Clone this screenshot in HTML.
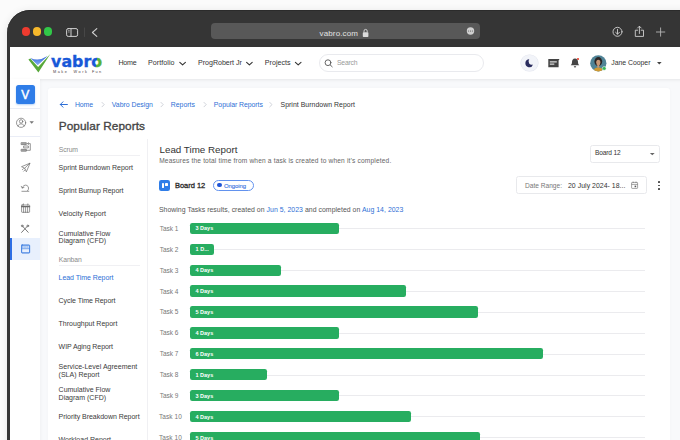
<!DOCTYPE html>
<html><head><meta charset="utf-8"><title>Vabro - Lead Time Report</title>
<style>
html,body{margin:0;padding:0;}
body{width:680px;height:440px;overflow:hidden;position:relative;background:#fbfbfb;font-family:"Liberation Sans",Arial,sans-serif;}
.t{position:absolute;white-space:nowrap;}
.b{position:absolute;}
svg{position:absolute;overflow:visible;}
</style></head><body>
<div class="b" style="left:6.5px;top:10.3px;width:700px;height:500px;background:#353535;border-radius:23px 0 0 0;box-shadow:0 1px 9px rgba(0,0,0,.09), inset 0 1px 0 #2b2b2b;"></div>
<div class="b" style="left:10px;top:47px;width:700px;height:500px;background:#f8f9fb;"></div>
<div class="b" style="left:21.65px;top:27.35px;width:8.5px;height:8.5px;background:#ee3b2f;border-radius:50%;"></div>
<div class="b" style="left:32.85px;top:27.35px;width:8.5px;height:8.5px;background:#f6b82b;border-radius:50%;"></div>
<div class="b" style="left:43.95px;top:27.35px;width:8.5px;height:8.5px;background:#31c748;border-radius:50%;"></div>
<svg width="680" height="440" viewBox="0 0 680 440" style="left:0;top:0" fill="none" stroke="#d0d0d0" stroke-width="1" stroke-linecap="round" stroke-linejoin="round">
<rect x="66.6" y="28.6" width="11" height="7.8" rx="1.6"/>
<line x1="71" y1="28.6" x2="71" y2="36.4"/>
<line x1="68.3" y1="30.6" x2="69.3" y2="30.6" stroke-width=".6"/>
<line x1="68.3" y1="32" x2="69.3" y2="32" stroke-width=".6"/>
<line x1="84.5" y1="28" x2="84.5" y2="36.5" stroke="#4c4c4c" stroke-width=".8"/>
<polyline points="96.8,28.6 92.4,32.5 96.8,36.4" stroke-width="1.1"/>
<circle cx="617.5" cy="31.8" r="4.5" stroke-width=".9"/>
<path d="M617.5 29.3V34M615.6 32.3L617.5 34.2L619.4 32.3" stroke-width=".9"/>
<path d="M637.6 30.2H635.3V36.4H643.5V30.2H641.2" stroke-width=".9"/>
<path d="M639.4 33.5V26.4M637.6 28L639.4 26.2L641.2 28" stroke-width=".9"/>
<path d="M660.6 27.9V36.2M656.4 32H664.8" stroke-width=".9" stroke="#b4b4b4"/>
</svg>
<div class="b" style="left:211px;top:22.7px;width:269.3px;height:16.1px;background:#585858;border-radius:4px;"></div>
<div class="t" style="left:319.50px;top:23.75px;font-size:8px;line-height:20px;color:#e2e2e2;letter-spacing:0.144px;">vabro.com</div>
<svg width="680" height="440" viewBox="0 0 680 440" style="left:0;top:0">
<rect x="362.8" y="32.2" width="5.6" height="4.8" rx=".7" fill="#dcdcdc"/>
<path d="M364 32.4V31a1.6 1.6 0 0 1 3.2 0V32.4" fill="none" stroke="#dcdcdc" stroke-width=".9"/>
<circle cx="470.5" cy="31" r="3.7" fill="#cfcfcf"/>
<circle cx="468.6" cy="31" r=".55" fill="#555"/><circle cx="470.5" cy="31" r=".55" fill="#555"/><circle cx="472.4" cy="31" r=".55" fill="#555"/>
</svg>
<div class="b" style="left:10px;top:47px;width:680px;height:32px;background:#fff;box-shadow:0 1px 3px rgba(0,0,0,.08);"></div>
<svg width="680" height="440" viewBox="0 0 680 440" style="left:0;top:0">
<defs><linearGradient id="lgb" x1="0" y1="0" x2="0" y2="1"><stop offset="0" stop-color="#2f63d8"/><stop offset="1" stop-color="#86adf6"/></linearGradient></defs>
<path d="M28.400 59.500L30.300 58.500L38.100 67.100L50.300 54.100L38.400 72.500Z" fill="#58a83a"/>
<path d="M30.400 57.900Q38.600 61.900 47.600 56.100L37.700 65.200Z" fill="url(#lgb)"/>
</svg>
<svg width="680" height="440" viewBox="0 0 680 440" style="left:0;top:0">
<defs><linearGradient id="og" gradientUnits="userSpaceOnUse" x1="92.500" y1="59" x2="101.500" y2="61"><stop offset=".5" stop-color="#1858d8"/><stop offset=".5" stop-color="#55b13c"/></linearGradient></defs>
<text x="51.100" y="67" font-family="DejaVu Sans, sans-serif" font-weight="bold" font-size="16.500" textLength="51" lengthAdjust="spacingAndGlyphs" fill="#1858d8" stroke="#1858d8" stroke-width=".35">vabr<tspan fill="url(#og)" stroke="url(#og)">o</tspan></text>
</svg>
<div class="t" style="left:52.90px;top:62.25px;font-size:3.8px;line-height:20px;color:#4a4444;letter-spacing:1.603px;">Make</div>
<div class="t" style="left:73.60px;top:62.25px;font-size:3.8px;line-height:20px;color:#4a4444;letter-spacing:1.465px;">Work</div>
<div class="t" style="left:92.00px;top:62.25px;font-size:3.8px;line-height:20px;color:#4a4444;letter-spacing:1.226px;">Fun</div>
<div class="t" style="left:118.40px;top:53.25px;font-size:7.1px;line-height:20px;color:#333;letter-spacing:-0.214px;">Home</div>
<div class="t" style="left:148.00px;top:53.25px;font-size:7.1px;line-height:20px;color:#333;letter-spacing:0.057px;">Portfolio</div>
<div class="t" style="left:198.00px;top:53.25px;font-size:7.1px;line-height:20px;color:#333;letter-spacing:-0.025px;">ProgRobert Jr</div>
<div class="t" style="left:264.80px;top:53.25px;font-size:7.1px;line-height:20px;color:#333;letter-spacing:0.022px;">Projects</div>
<svg width="680" height="440" viewBox="0 0 680 440" style="left:0;top:0" fill="none" stroke="#333" stroke-width="1.100" stroke-linecap="round" stroke-linejoin="round"><polyline points="179.79999999999998,62.3 182.6,64.9 185.4,62.3"/><polyline points="246.6,62.3 249.4,64.9 252.20000000000002,62.3"/><polyline points="295.4,62.3 298.2,64.9 301.0,62.3"/></svg>
<div class="b" style="left:319px;top:54.2px;width:164.8px;height:17.4px;background:#fff;border:.7px solid #e9eaee;border-radius:9px;box-sizing:border-box;"></div>
<svg width="680" height="440" viewBox="0 0 680 440" style="left:0;top:0" fill="none" stroke="#555" stroke-width=".9" stroke-linecap="round"><circle cx="328" cy="62.700" r="2.900"/><line x1="330.200" y1="64.900" x2="332.200" y2="66.800"/></svg>
<div class="t" style="left:337.00px;top:52.75px;font-size:6.8px;line-height:20px;color:#9a9a9a;letter-spacing:-0.188px;">Search</div>
<div class="b" style="left:521.3px;top:54.8px;width:16.4px;height:16.4px;background:#f2f4f9;border-radius:50%;box-shadow:0 0 0 .6px #e3e6ee;"></div>
<svg width="680" height="440" viewBox="0 0 680 440" style="left:0;top:0">
<path transform="translate(-0.9 0.1) translate(530 63) scale(.86) translate(-530 -63)" d="M530.2 58.6a4.6 4.6 0 1 0 4.4 6.1a3.9 3.9 0 0 1 -4.4 -6.1z" fill="#2a2c5e"/>
<path d="M548.3 58.9H559.5L558.6 60.6V67.2H548.3Z" fill="#444"/>
<rect x="549.8" y="61.4" width="7" height="1" fill="#fff"/><rect x="549.8" y="63.6" width="4.5" height="1" fill="#fff"/>
<path d="M575 58.4c2.2 0 3 1.8 3 3.6c0 1.8.6 2.6 1.3 3.3H570.7c.7-.7 1.3-1.5 1.3-3.3c0-1.8.8-3.600 3-3.600z" fill="#444"/>
<path d="M573.8 66.2a1.2 1.2 0 0 0 2.400 0z" fill="#444"/>
<circle cx="578" cy="59" r="1.1" fill="#e8412f"/>
</svg>
<svg width="17" height="17" viewBox="0 0 17 17" style="left:589.8px;top:54.6px">
<defs><clipPath id="av"><circle cx="8.3" cy="8.3" r="8.1"/></clipPath></defs>
<g clip-path="url(#av)">
<rect width="17" height="17" fill="#4f8396"/>
<ellipse cx="8.3" cy="6.6" rx="3.9" ry="4.5" fill="#2b2626"/>
<ellipse cx="8.3" cy="7.5" rx="2.1" ry="2.7" fill="#c79878"/>
<path d="M3.400 17c0-3.400 2.300-4.600 4.900-4.600s4.900 1.200 4.900 4.600z" fill="#cf9a34"/>
<rect x="7.300" y="9.800" width="2" height="2.800" fill="#c79878"/>
</g>
<circle cx="14.2" cy="13.400" r="1.900" fill="#35b558" stroke="#fff" stroke-width=".5"/>
</svg>
<div class="t" style="left:611.30px;top:52.75px;font-size:6.9px;line-height:20px;color:#333;letter-spacing:-0.031px;">Jane Cooper</div>
<svg width="680" height="440" viewBox="0 0 680 440" style="left:0;top:0"><path d="M657 61.9H661.600L659.300 64.400Z" fill="#444"/></svg>
<div class="b" style="left:10px;top:79px;width:30px;height:400px;background:#fff;box-shadow:1px 0 3px rgba(0,0,0,.03);"></div>
<div class="b" style="left:15.5px;top:84.5px;width:19.5px;height:19.5px;background:#2f7de8;border-radius:2.5px;box-shadow:0 1px 2px rgba(47,125,232,.35);"></div>
<div class="t" style="left:21.20px;top:85.25px;font-size:12px;line-height:20px;color:#fff;-webkit-text-stroke:0.45px #fff;">V</div>
<div class="b" style="left:10px;top:107.9px;width:30px;height:0.8px;background:#eaedf6;"></div>
<div class="b" style="left:10px;top:136px;width:30px;height:0.8px;background:#eaedf6;"></div>
<div class="b" style="left:10px;top:238.2px;width:30px;height:21.4px;background:#e8f0fd;"></div>
<div class="b" style="left:10px;top:238.2px;width:1.6px;height:21.4px;background:#2f6fe4;"></div>
<svg width="680" height="440" viewBox="0 0 680 440" style="left:0;top:0" fill="none" stroke="#6a6a6a" stroke-width=".7" stroke-linecap="round" stroke-linejoin="round">
<circle cx="21.100" cy="122.800" r="4.600"/><circle cx="21.100" cy="121.400" r="1.700"/><path d="M17.900 126c.7-1.500 1.900-2.100 3.200-2.100s2.500.6 3.200 2.100"/>
<path d="M29.500 121.300H33.900L31.700 123.800Z" fill="#777" stroke="none"/>
<!-- flow -->
<rect x="21.500" y="142.700" width="4.800" height="1.900" fill="#aaa"/><rect x="24" y="146" width="4.400" height="1.900"/><rect x="21.500" y="149.300" width="4.800" height="1.900" fill="#aaa"/>
<path d="M27.600 143.600H30.300V150.300H26.500M28.600 142.700L27.600 143.600L28.600 144.500"/>
<!-- plane -->
<path d="M29.700 163.300L21.500 166.700L24.700 168.200L26.200 171.500Z"/><path d="M24.700 168.200L29.700 163.300"/><path d="M22.400 169.700L23.500 168.600M23.700 171.200L24.900 170"/>
<!-- undo -->
<path d="M21.900 191.300H28.800"/><path d="M22.300 187.900A3.200 3.200 0 1 1 27.600 190.700"/><path d="M21.300 186.300L22.200 188.100L24 187.400"/>
<!-- calendar -->
<rect x="21.600" y="205" width="8" height="7.300" rx=".5"/><path d="M21.600 206.700H29.600" stroke-width="1.300"/><path d="M23.400 203.900V205.200M27.800 203.900V205.200M23.600 207.200V212.300M25.600 207.200V212.300M27.600 207.200V212.300"/>
<!-- tools -->
<path d="M22 225.600L28.200 232.300M28.100 225.400L21.600 232.400" stroke-width=".9"/><circle cx="22.200" cy="225.900" r=".9"/><circle cx="27.800" cy="225.900" r=".9"/>
<!-- board active -->
<g stroke="#3a7be0"><rect x="21.600" y="245.100" width="8" height="7.800" rx=".5"/><path d="M21.600 248.700H29.600"/><rect x="21.600" y="245.100" width="8" height="3.600" fill="#8fb6f0" stroke="none"/><rect x="21.600" y="245.100" width="8" height="7.800" rx=".5"/><path d="M23.200 246.500V247.500M25 246.300V247.500M26.800 246.500V247.500M28.300 246.300V247.500" stroke="#fff" stroke-width=".6"/></g>
</svg>
<div class="b" style="left:48.2px;top:87.8px;width:621.8px;height:400px;background:#fff;border-radius:3px 3px 0 0;box-shadow:0 0 3px rgba(0,0,0,.03);"></div>
<svg width="680" height="440" viewBox="0 0 680 440" style="left:0;top:0" fill="none" stroke="#2e6fd6" stroke-width="1" stroke-linecap="round" stroke-linejoin="round"><path d="M67.400 104.500H60.400M63 101.800L60.300 104.500L63 107.200"/></svg>
<div class="t" style="left:75.00px;top:94.75px;font-size:6.9px;line-height:20px;color:#2e6fd6;letter-spacing:-0.136px;">Home</div>
<div class="t" style="left:111.80px;top:94.75px;font-size:6.9px;line-height:20px;color:#2e6fd6;letter-spacing:-0.009px;">Vabro Design</div>
<div class="t" style="left:170.80px;top:94.75px;font-size:6.9px;line-height:20px;color:#2e6fd6;letter-spacing:0.007px;">Reports</div>
<div class="t" style="left:213.80px;top:94.75px;font-size:6.9px;line-height:20px;color:#2e6fd6;letter-spacing:-0.047px;">Popular Reports</div>
<div class="t" style="left:280.50px;top:94.75px;font-size:6.9px;line-height:20px;color:#333;letter-spacing:0.041px;">Sprint Burndown Report</div>
<svg width="680" height="440" viewBox="0 0 680 440" style="left:0;top:0" fill="none" stroke="#c4c8d0" stroke-width=".8" stroke-linecap="round" stroke-linejoin="round"><polyline points="102,102.4 104.2,104.6 102,106.8"/><polyline points="161,102.4 163.2,104.6 161,106.8"/><polyline points="204,102.4 206.2,104.6 204,106.8"/><polyline points="269.8,102.4 272.0,104.6 269.8,106.8"/></svg>
<div class="t" style="left:58.80px;top:116.25px;font-size:11.8px;line-height:20px;color:#454545;letter-spacing:0.067px;-webkit-text-stroke:0.35px #454545;">Popular Reports</div>
<div class="t" style="left:58.80px;top:139.75px;font-size:6.8px;line-height:20px;color:#8a8a8a;letter-spacing:-0.111px;">Scrum</div>
<div class="b" style="left:58.5px;top:155px;width:81px;height:0.7px;background:#f0f0f3;"></div>
<div class="t" style="left:58.60px;top:157.75px;font-size:7px;line-height:20px;color:#3b3b3b;letter-spacing:-0.014px;">Sprint Burndown Report</div>
<div class="t" style="left:58.60px;top:180.75px;font-size:7px;line-height:20px;color:#3b3b3b;letter-spacing:-0.045px;">Sprint Burnup Report</div>
<div class="t" style="left:58.60px;top:203.75px;font-size:7px;line-height:20px;color:#3b3b3b;letter-spacing:0.023px;">Velocity Report</div>
<div class="t" style="left:58.60px;top:223.75px;font-size:7px;line-height:20px;color:#3b3b3b;">Cumulative Flow</div>
<div class="t" style="left:58.60px;top:230.75px;font-size:7px;line-height:20px;color:#3b3b3b;">Diagram (CFD)</div>
<div class="t" style="left:58.80px;top:249.75px;font-size:6.8px;line-height:20px;color:#8a8a8a;letter-spacing:-0.089px;">Kanban</div>
<div class="b" style="left:58.5px;top:265.4px;width:81px;height:0.7px;background:#f0f0f3;"></div>
<div class="t" style="left:58.60px;top:267.75px;font-size:7px;line-height:20px;color:#2e6fd6;letter-spacing:-0.050px;">Lead Time Report</div>
<div class="t" style="left:58.60px;top:290.75px;font-size:7px;line-height:20px;color:#3b3b3b;letter-spacing:-0.042px;">Cycle Time Report</div>
<div class="t" style="left:58.60px;top:313.75px;font-size:7px;line-height:20px;color:#3b3b3b;">Throughput Report</div>
<div class="t" style="left:58.60px;top:336.75px;font-size:7px;line-height:20px;color:#3b3b3b;letter-spacing:-0.074px;">WIP Aging Report</div>
<div class="t" style="left:58.60px;top:356.75px;font-size:7px;line-height:20px;color:#3b3b3b;letter-spacing:0.023px;">Service-Level Agreement</div>
<div class="t" style="left:58.60px;top:364.75px;font-size:7px;line-height:20px;color:#3b3b3b;">(SLA) Report</div>
<div class="t" style="left:58.60px;top:379.75px;font-size:7px;line-height:20px;color:#3b3b3b;">Cumulative Flow</div>
<div class="t" style="left:58.60px;top:387.75px;font-size:7px;line-height:20px;color:#3b3b3b;">Diagram (CFD)</div>
<div class="t" style="left:58.60px;top:406.75px;font-size:7px;line-height:20px;color:#3b3b3b;letter-spacing:-0.029px;">Priority Breakdown Report</div>
<div class="t" style="left:58.60px;top:429.75px;font-size:7px;line-height:20px;color:#3b3b3b;">Workload Report</div>
<div class="b" style="left:147.2px;top:139px;width:0.7px;height:320px;background:#f0f0f3;"></div>
<div class="t" style="left:159.50px;top:139.75px;font-size:9.8px;line-height:20px;color:#333;letter-spacing:0.007px;">Lead Time Report</div>
<div class="t" style="left:159.20px;top:150.75px;font-size:6.6px;line-height:20px;color:#666;letter-spacing:0.166px;">Measures the total time from when a task is created to when it’s completed.</div>
<div class="b" style="left:159.2px;top:180px;width:10.6px;height:10.7px;background:#2f7de8;border-radius:2.2px;"></div>
<div class="b" style="left:161.8px;top:182.8px;width:2.1px;height:5.2px;background:#fff;border-radius:.4px;"></div>
<div class="b" style="left:164.9px;top:182.8px;width:3.2px;height:3.3px;background:#fff;border-radius:.4px;"></div>
<div class="t" style="left:174.90px;top:175.75px;font-size:7.5px;line-height:20px;color:#2b2b2b;letter-spacing:-0.006px;-webkit-text-stroke:0.3px #2b2b2b;">Board 12</div>
<div class="b" style="left:213px;top:179.5px;width:40.6px;height:11.3px;background:#fff;border:.6px solid #6292ee;border-radius:6px;box-sizing:border-box;"></div>
<div class="b" style="left:217.1px;top:182.8px;width:4.6px;height:4.6px;background:#1f55d6;border-radius:50%;"></div>
<div class="t" style="left:224.00px;top:176.25px;font-size:6px;line-height:20px;color:#3d76df;letter-spacing:-0.114px;-webkit-text-stroke:0.12px #3d76df;">Ongoing</div>
<div class="t" style="left:158.90px;top:199.75px;font-size:6.9px;line-height:20px;color:#555;letter-spacing:0.038px">Showing Tasks results, created on <span style="color:#2e6fd6">Jun 5, 2023</span> and completed on <span style="color:#2e6fd6">Aug 14, 2023</span></div>
<div class="b" style="left:590.3px;top:144.8px;width:69.5px;height:18.6px;background:#fff;border:.7px solid #e8e9ec;border-radius:2.500px;box-sizing:border-box;"></div>
<div class="t" style="left:595.00px;top:142.75px;font-size:6.6px;line-height:20px;color:#333;letter-spacing:-0.141px;">Board 12</div>
<svg width="680" height="440" viewBox="0 0 680 440" style="left:0;top:0"><path d="M649.900 152.900H654.700L652.300 155.200Z" fill="#666"/></svg>
<div class="b" style="left:516.3px;top:176.2px;width:130.5px;height:18.2px;background:#fff;border:.7px solid #e8e9ec;border-radius:2.500px;box-sizing:border-box;"></div>
<div class="t" style="left:525.00px;top:175.75px;font-size:6.6px;line-height:20px;color:#777;letter-spacing:-0.006px;">Date Range:</div>
<div class="t" style="left:568.00px;top:175.75px;font-size:6.9px;line-height:20px;color:#333;letter-spacing:0.040px;">20 July 2024- 18...</div>
<svg width="680" height="440" viewBox="0 0 680 440" style="left:0;top:0" fill="none" stroke="#666" stroke-width=".6"><rect x="631.600" y="182.400" width="6" height="6" rx=".6"/><path d="M631.600 184.400H637.600M633.200 181.600V183M636 181.600V183"/><rect x="634.600" y="185.600" width="1.600" height="1.600" fill="#555" stroke="none"/></svg>
<div class="b" style="left:658px;top:181.45000000000002px;width:1.7px;height:1.7px;background:#444;border-radius:50%;"></div>
<div class="b" style="left:658px;top:184.65px;width:1.7px;height:1.7px;background:#444;border-radius:50%;"></div>
<div class="b" style="left:658px;top:187.85px;width:1.7px;height:1.7px;background:#444;border-radius:50%;"></div>
<div class="b" style="left:189.7px;top:227.85px;width:455.3px;height:0.7px;background:#ebebee;"></div>
<div class="b" style="left:189.7px;top:222.6px;width:149.2px;height:11.2px;background:#27ad60;border-radius:2.200px;"></div>
<div class="t" style="left:159.70px;top:218.75px;font-size:6.5px;line-height:20px;color:#777;letter-spacing:-0.017px;">Task 1</div>
<div class="t" style="left:195.60px;top:218.25px;font-size:5.5px;line-height:20px;color:#fff;letter-spacing:-0.028px;font-weight:bold;">3 Days</div>
<div class="b" style="left:189.7px;top:248.79999999999998px;width:455.3px;height:0.7px;background:#ebebee;"></div>
<div class="b" style="left:189.7px;top:243.54999999999998px;width:24.400000000000006px;height:11.2px;background:#27ad60;border-radius:2.200px;"></div>
<div class="t" style="left:159.70px;top:239.75px;font-size:6.5px;line-height:20px;color:#777;letter-spacing:-0.017px;">Task 2</div>
<div class="t" style="left:195.60px;top:239.25px;font-size:5.5px;line-height:20px;color:#fff;font-weight:bold;">1 D...</div>
<div class="b" style="left:189.7px;top:269.74999999999994px;width:455.3px;height:0.7px;background:#ebebee;"></div>
<div class="b" style="left:189.7px;top:264.49999999999994px;width:91.30000000000001px;height:11.2px;background:#27ad60;border-radius:2.200px;"></div>
<div class="t" style="left:159.70px;top:260.75px;font-size:6.5px;line-height:20px;color:#777;letter-spacing:-0.017px;">Task 3</div>
<div class="t" style="left:195.60px;top:260.25px;font-size:5.5px;line-height:20px;color:#fff;letter-spacing:-0.028px;font-weight:bold;">4 Days</div>
<div class="b" style="left:189.7px;top:290.69999999999993px;width:455.3px;height:0.7px;background:#ebebee;"></div>
<div class="b" style="left:189.7px;top:285.44999999999993px;width:216.60000000000002px;height:11.2px;background:#27ad60;border-radius:2.200px;"></div>
<div class="t" style="left:159.70px;top:281.75px;font-size:6.5px;line-height:20px;color:#777;letter-spacing:-0.017px;">Task 4</div>
<div class="t" style="left:195.60px;top:281.25px;font-size:5.5px;line-height:20px;color:#fff;letter-spacing:-0.028px;font-weight:bold;">4 Days</div>
<div class="b" style="left:189.7px;top:311.65px;width:455.3px;height:0.7px;background:#ebebee;"></div>
<div class="b" style="left:189.7px;top:306.4px;width:288.1px;height:11.2px;background:#27ad60;border-radius:2.200px;"></div>
<div class="t" style="left:159.70px;top:301.75px;font-size:6.5px;line-height:20px;color:#777;letter-spacing:-0.017px;">Task 5</div>
<div class="t" style="left:195.60px;top:302.25px;font-size:5.5px;line-height:20px;color:#fff;letter-spacing:-0.028px;font-weight:bold;">5 Days</div>
<div class="b" style="left:189.7px;top:332.59999999999997px;width:455.3px;height:0.7px;background:#ebebee;"></div>
<div class="b" style="left:189.7px;top:327.34999999999997px;width:149.2px;height:11.2px;background:#27ad60;border-radius:2.200px;"></div>
<div class="t" style="left:159.70px;top:322.75px;font-size:6.5px;line-height:20px;color:#777;letter-spacing:-0.017px;">Task 6</div>
<div class="t" style="left:195.60px;top:323.25px;font-size:5.5px;line-height:20px;color:#fff;letter-spacing:-0.028px;font-weight:bold;">4 Days</div>
<div class="b" style="left:189.7px;top:353.54999999999995px;width:455.3px;height:0.7px;background:#ebebee;"></div>
<div class="b" style="left:189.7px;top:348.29999999999995px;width:353.2px;height:11.2px;background:#27ad60;border-radius:2.200px;"></div>
<div class="t" style="left:159.70px;top:343.75px;font-size:6.5px;line-height:20px;color:#777;letter-spacing:-0.017px;">Task 7</div>
<div class="t" style="left:195.60px;top:344.25px;font-size:5.5px;line-height:20px;color:#fff;letter-spacing:-0.028px;font-weight:bold;">6 Days</div>
<div class="b" style="left:189.7px;top:374.5px;width:455.3px;height:0.7px;background:#ebebee;"></div>
<div class="b" style="left:189.7px;top:369.25px;width:77.30000000000001px;height:11.2px;background:#27ad60;border-radius:2.200px;"></div>
<div class="t" style="left:159.70px;top:364.75px;font-size:6.5px;line-height:20px;color:#777;letter-spacing:-0.017px;">Task 8</div>
<div class="t" style="left:195.60px;top:365.25px;font-size:5.5px;line-height:20px;color:#fff;letter-spacing:-0.028px;font-weight:bold;">1 Days</div>
<div class="b" style="left:189.7px;top:395.44999999999993px;width:455.3px;height:0.7px;background:#ebebee;"></div>
<div class="b" style="left:189.7px;top:390.19999999999993px;width:149.2px;height:11.2px;background:#27ad60;border-radius:2.200px;"></div>
<div class="t" style="left:159.70px;top:385.75px;font-size:6.5px;line-height:20px;color:#777;letter-spacing:-0.017px;">Task 9</div>
<div class="t" style="left:195.60px;top:386.25px;font-size:5.5px;line-height:20px;color:#fff;letter-spacing:-0.028px;font-weight:bold;">3 Days</div>
<div class="b" style="left:189.7px;top:416.4px;width:455.3px;height:0.7px;background:#ebebee;"></div>
<div class="b" style="left:189.7px;top:411.15px;width:221.0px;height:11.2px;background:#27ad60;border-radius:2.200px;"></div>
<div class="t" style="left:158.90px;top:406.75px;font-size:6.5px;line-height:20px;color:#777;letter-spacing:0.084px;">Task 10</div>
<div class="t" style="left:195.60px;top:407.25px;font-size:5.5px;line-height:20px;color:#fff;letter-spacing:-0.028px;font-weight:bold;">4 Days</div>
<div class="b" style="left:189.7px;top:437.34999999999997px;width:455.3px;height:0.7px;background:#ebebee;"></div>
<div class="b" style="left:189.7px;top:432.09999999999997px;width:290.6px;height:11.2px;background:#27ad60;border-radius:2.200px;"></div>
<div class="t" style="left:158.90px;top:427.75px;font-size:6.5px;line-height:20px;color:#777;letter-spacing:0.084px;">Task 10</div>
<div class="t" style="left:195.60px;top:428.25px;font-size:5.5px;line-height:20px;color:#fff;letter-spacing:-0.028px;font-weight:bold;">5 Days</div>
</body></html>
